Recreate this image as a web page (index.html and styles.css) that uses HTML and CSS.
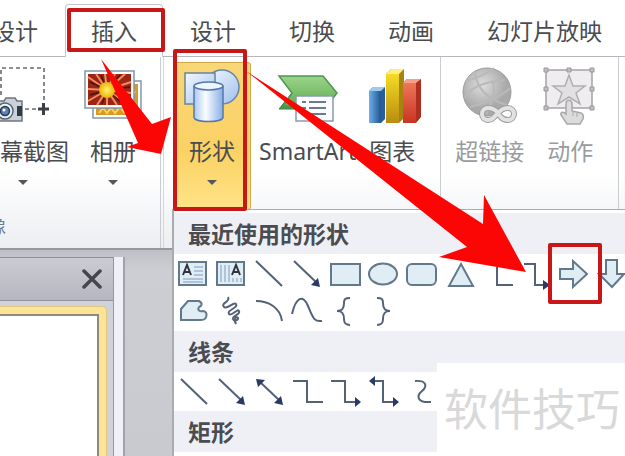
FILE: index.html
```html
<!DOCTYPE html>
<html lang="zh-CN">
<head>
  <meta charset="UTF-8" />
  <meta name="viewport" content="width=device-width, initial-scale=1.0"/>
  <title>插入 - 形状</title>
  <link rel="stylesheet" href="styles.css">
</head>
<body>

  <nav class="tabs">
    <button class="tab">设计</button>
    <button class="tab active">插入</button>
    <button class="tab">设计</button>
    <button class="tab">切换</button>
    <button class="tab">动画</button>
    <button class="tab">幻灯片放映</button>
  </nav>

  <!-- RIBBON -->
  <div class="ribbon">
    <div class="group images">
      <div class="tools">
        <button class="tool">
          <svg class="icon" viewBox="0 0 56 58">
            <path d="M6 29V2h43v41H29" fill="none" stroke="#666b72" stroke-width="1.6" stroke-dasharray="4 3"/>
            <path d="M43 43h11M48.500 37v12" stroke="#3c4046" stroke-width="3"/>
            <path d="M1 35h8l2-3h9l2 3h5v20H1z" fill="#c9d1da" stroke="#6d7580" stroke-width="1.500"/>
            <path d="M22 40h5v10h-5z" fill="#333a44"/>
            <circle cx="10" cy="45" r="8" fill="#eef2f6" stroke="#59636f" stroke-width="1.500"/>
            <circle cx="10" cy="45" r="4.500" fill="#5b82b0" stroke="#26384e" stroke-width="1.500"/>
            <circle cx="9" cy="44" r="1.500" fill="#fff"/>
          </svg>
          <span class="label">屏幕截图</span>
          <span class="caret"></span>
        </button>
        <button class="tool">
          <svg class="icon" viewBox="0 0 56 58">
            <defs>
              <radialGradient id="sun"><stop offset="0" stop-color="#fff36a"/><stop offset="1" stop-color="#e9b40b"/></radialGradient>
            </defs>
            <path d="M8 15h48v37H8z" fill="#fff" stroke="#8296a8" stroke-width="1.500"/>
            <path d="M11 18h42v31H11z" fill="#d99a24"/>
            <path d="M14 47l4-5 4 5 4-5 4 5 5-6 4 5 6-10 5-11" stroke="#f8d36a" stroke-width="2" fill="none"/>
            <path d="M0 5h49v37H0z" fill="#fff" stroke="#8296a8" stroke-width="1.500"/>
            <path d="M3 8h43v31H3z" fill="#9e2414"/>
            <path d="M22 24L3 11M22 24L11 8M22 24L20 8M22 24L30 8M22 24L40 8M22 24L46 16M22 24L46 27M22 24L44 39M22 24L32 39M22 24L22 39M22 24L12 39M22 24L3 35M22 24L3 23" stroke="#ee8e62" stroke-width="2"/>
            <path d="M22 24L5 16M22 24L16 9M22 24L35 9M22 24L45 21M22 24L38 38M22 24L17 38M22 24L5 29" stroke="#4b160e" stroke-width="1.500"/>
            <circle cx="22" cy="24" r="8" fill="url(#sun)"/>
          </svg>
          <span class="label">相册</span>
          <span class="caret"></span>
        </button>
      </div>
      <div class="caption">图像</div>
    </div>

    <div class="group illustrations">
      <div class="tools">
        <button class="tool selected">
          <svg class="icon" viewBox="0 0 56 58">
            <defs>
              <linearGradient id="glass" x2="1" y2="1"><stop offset="0" stop-color="#f3f9ff"/><stop offset="1" stop-color="#9fc0ec"/></linearGradient>
              <linearGradient id="can"><stop offset="0" stop-color="#a9c8f2"/><stop offset=".4" stop-color="#fafdff"/><stop offset="1" stop-color="#86aee6"/></linearGradient>
            </defs>
            <circle cx="38" cy="21" r="17" fill="url(#glass)" stroke="#6686ad" stroke-width="1.500"/>
            <path d="M1 7h30v31H1z" fill="url(#glass)" stroke="#6b8494" stroke-width="1.500"/>
            <path d="M10 20v31c0 6 29 6 29 0V20" fill="url(#can)" stroke="#5578a8" stroke-width="1.500"/>
            <ellipse cx="24.500" cy="20" rx="14.500" ry="4" fill="#edf5ff" stroke="#5578a8" stroke-width="1.500"/>
          </svg>
          <span class="label">形状</span>
          <span class="caret"></span>
        </button>
        <button class="tool">
          <svg class="icon" viewBox="0 0 56 58">
            <defs>
              <linearGradient id="leaf" x2="0" y2="1"><stop offset="0" stop-color="#9bd48a"/><stop offset="1" stop-color="#62ae56"/></linearGradient>
            </defs>
            <path d="M12 27L-1 43h17z" fill="#459a44" stroke="#3d8240"/>
            <path d="M-1 10h44l14 17-10 13H3l9-13z" fill="url(#leaf)" stroke="#4e9650" stroke-width="1.500"/>
            <path d="M16 30h37v25H16z" fill="#fbfcff" stroke="#8a9ab0" stroke-width="1.500"/>
            <path d="M22 36h4M22 42h4M22 48h4M29 36h17M29 42h17M29 48h17" stroke="#6b7a90" stroke-width="2"/>
          </svg>
          <span class="label">SmartArt</span>
        </button>
        <button class="tool">
          <svg class="icon" viewBox="0 0 56 58">
            <defs>
              <linearGradient id="blue"><stop offset="0" stop-color="#6db0ea"/><stop offset="1" stop-color="#20568f"/></linearGradient>
              <linearGradient id="gold" x2="0" y2="1"><stop offset="0" stop-color="#f5dc25"/><stop offset="1" stop-color="#b88c10"/></linearGradient>
              <linearGradient id="red" x2="0" y2="1"><stop offset="0" stop-color="#ee7658"/><stop offset="1" stop-color="#c93424"/></linearGradient>
            </defs>
            <path d="M5 25l4-4h12v32l-4 4H5z" fill="#265f99"/>
            <path d="M5 25h12v32H5z" fill="url(#blue)"/>
            <path d="M5 25l4-4h12l-4 4z" fill="#9bcbf0"/>
            <path d="M22 8l5-5h13v49l-5 5H22z" fill="#a58411"/>
            <path d="M22 8h13v49H22z" fill="url(#gold)"/>
            <path d="M22 8l5-5h13l-5 5z" fill="#fff07c"/>
            <path d="M39 17l4-4h14v38l-5 6H39z" fill="#ac2f20"/>
            <path d="M39 17h13v40H39z" fill="url(#red)"/>
            <path d="M39 17l4-4h14l-5 4z" fill="#f6a08a"/>
          </svg>
          <span class="label">图表</span>
        </button>
      </div>
    </div>

    <div class="group links">
      <div class="tools">
        <button class="tool" disabled>
          <svg class="icon" viewBox="0 0 56 58">
            <defs>
              <radialGradient id="globe" cx=".4" cy=".35"><stop offset="0" stop-color="#dedede"/><stop offset="1" stop-color="#a9a9a9"/></radialGradient>
            </defs>
            <circle cx="25" cy="26" r="24" fill="url(#globe)" stroke="#9c9c9c"/>
            <path d="M4 15c8-2 18-5 28-13M3 32c6-12 20-16 40-18M13 7c2 14 10 26 32 32M30 14c4 10 2 20-6 34M48 22c-8 8-20 14-40 19" fill="none" stroke="#b9b9b9" stroke-width="2"/>
            <path d="M36 47c-3-4-6-5-10-5a6 6 0 0 0 0 12c5 0 7-4 10-7s5-5 10-5a6 6 0 0 1 0 12c-4 0-6-1-8-4" fill="none" stroke="#9e9e9e" stroke-width="6" stroke-linecap="round"/>
            <path d="M36 47c-3-4-6-5-10-5a6 6 0 0 0 0 12c5 0 7-4 10-7s5-5 10-5a6 6 0 0 1 0 12c-4 0-6-1-8-4" fill="none" stroke="#e2e2e2" stroke-width="4" stroke-linecap="round"/>
          </svg>
          <span class="label">超链接</span>
        </button>
        <button class="tool" disabled>
          <svg class="icon" viewBox="0 0 56 58">
            <path d="M4 4h46v38H4z" fill="#efedf0" stroke="#a5a3a6" stroke-width="1.500"/>
            <path d="M27 9l4 11h12l-9 7 4 11-11-7-11 7 4-11-9-7h12z" fill="#e3e0e3" stroke="#b1aeb1" stroke-width="1.500"/>
            <path d="M2 2h4v4H2zM25 2h4v4h-4zM48 2h4v4h-4zM2 21h4v4H2zM48 21h4v4h-4zM2 40h4v4H2zM48 40h4v4h-4z" fill="#c2c0c2" stroke="#999"/>
            <path d="M24 38c0-5 6-5 6 0v7l9 2c2 1 3 3 2 6l-3 5H25l-6-9c-1-3 2-4 5-1z" fill="#dcdcdc" stroke="#a8a8a8" stroke-width="1.500"/>
            <path d="M31 46v4M35 47v4" stroke="#a8a8a8"/>
          </svg>
          <span class="label">动作</span>
        </button>
      </div>
    </div>
  </div>

  <!-- SLIDE PANE -->
  <div class="workspace">
    <div class="pane">
      <div class="pane-head">
        <button class="close-btn" aria-label="关闭">
          <svg viewBox="0 0 20 20"><path d="M2 2l16 16M18 2L2 18" stroke="#45474c" stroke-width="3.500" stroke-linecap="round"/></svg>
        </button>
      </div>
      <div class="slide-frame"><div class="slide"></div></div>
    </div>
    <div class="splitter"></div>
  </div>

  <!-- SHAPES MENU -->
  <div class="menu">
    <h2>最近使用的形状</h2>
    <div class="shapes">
      <button aria-label="文本框"><svg viewBox="0 0 38 38"><path class="fill" d="M5 8h27v23H5z"/><path class="thin" d="M20 13h9M20 17h9M20 21h9M9 25h20M9 28h20"/><path class="bold" d="M9 21l4-10 4 10M10 18h6"/></svg></button>
      <button aria-label="竖排文本框"><svg viewBox="0 0 38 38"><path class="fill" d="M5 8h27v23H5z"/><path class="thin" d="M9 11v17M13 11v17M17 11v17M21 24v4M25 24v4M29 24v4"/><path class="bold" d="M20 21l4-10 4 10M21 18h6"/></svg></button>
      <button aria-label="直线"><svg viewBox="0 0 38 38"><path d="M6 7l26 25"/></svg></button>
      <button aria-label="箭头"><svg viewBox="0 0 38 38"><path d="M6 7l23 22"/><path class="head" d="M32 33l-9-2 7-7z"/></svg></button>
      <button aria-label="矩形"><svg viewBox="0 0 38 38"><path class="fill" d="M5 10h29v21H5z"/></svg></button>
      <button aria-label="椭圆"><svg viewBox="0 0 38 38"><ellipse class="fill" cx="19" cy="20" rx="14" ry="10.500"/></svg></button>
      <button aria-label="圆角矩形"><svg viewBox="0 0 38 38"><rect class="fill" x="5" y="10" width="29" height="21" rx="5"/></svg></button>
      <button aria-label="三角形"><svg viewBox="0 0 38 38"><path class="fill" d="M21 10l12 22H9z"/></svg></button>
      <button aria-label="肘形连接符"><svg viewBox="0 0 38 38"><path d="M10 10h9v21h16"/></svg></button>
      <button aria-label="肘形箭头连接符"><svg viewBox="0 0 38 38"><path d="M8 10h11v21h9"/><path class="head" d="M34 31l-7-5v10z"/></svg></button>
      <button aria-label="右箭头"><svg viewBox="0 0 38 38"><path class="fill" d="M6 15h13V7l14 13-14 13v-8H6z"/></svg></button>
      <button aria-label="下箭头"><svg viewBox="0 0 38 38"><path class="fill" d="M14 6h11v14h7L20 33 7 20h7z"/></svg></button>
      <button aria-label="任意多边形"><svg viewBox="0 0 38 38"><path class="fill" d="M14 9h11c4 2 3 5 0 6-2 3 1 5 4 4 5 0 5 9-2 9H7V17z"/></svg></button>
      <button aria-label="自由曲线"><svg viewBox="0 0 38 38"><path d="M16 5c3 5-8 6-4 10 3 3 10-6 12-3 3 4-10 6-7 10 3 3 8-6 10-3 2 4-7 4-6 8 1 3 6 1 5-1s-5 0-2 6"/></svg></button>
      <button aria-label="弧形"><svg viewBox="0 0 38 38"><path d="M6 9c12 0 24 6 26 20"/></svg></button>
      <button aria-label="曲线"><svg viewBox="0 0 38 38"><path d="M4 22C8 5 15 2 20 14s6 16 14 15"/></svg></button>
      <button aria-label="左大括号"><svg viewBox="0 0 38 38"><path d="M24 6c-5 0-6 1-6 5 0 6-2 8-7 8 5 0 7 2 7 8 0 4 1 6 6 6"/></svg></button>
      <button aria-label="右大括号"><svg viewBox="0 0 38 38"><path d="M13 6c5 0 6 1 6 5 0 6 2 8 7 8-5 0-7 2-7 8 0 4-1 6-6 6"/></svg></button>
    </div>

    <h2>线条</h2>
    <div class="shapes">
      <button aria-label="直线"><svg viewBox="0 0 38 38"><path d="M7 7l26 25"/></svg></button>
      <button aria-label="箭头"><svg viewBox="0 0 38 38"><path d="M7 7l22 21"/><path class="head" d="M33 33l-9-2 7-7z"/></svg></button>
      <button aria-label="双箭头"><svg viewBox="0 0 38 38"><path d="M10 10l19 18"/><path class="head" d="M33 33l-9-2 7-7zM6 7l9 1-7 7z"/></svg></button>
      <button aria-label="肘形连接符"><svg viewBox="0 0 38 38"><path d="M5 9h14v21h16"/></svg></button>
      <button aria-label="肘形箭头连接符"><svg viewBox="0 0 38 38"><path d="M5 9h14v21h10"/><path class="head" d="M35 30l-6-5v10z"/></svg></button>
      <button aria-label="肘形双箭头连接符"><svg viewBox="0 0 38 38"><path d="M10 9h9v21h10"/><path class="head" d="M35 30l-6-5v10zM5 9l6-5v10z"/></svg></button>
      <button aria-label="曲线连接符"><svg viewBox="0 0 38 38"><path d="M13 9c11-1 13 5 7 10s-5 12 9 11"/></svg></button>
    </div>

    <h2>矩形</h2>
  </div>

  <div class="watermark">软件技巧</div>

  <!-- MARKS -->
  <svg class="marks" width="625" height="456">
    <g fill="#fc0605">
      <path d="M101 59L152 124 171 117 161 154 127 147 138 143z"/>
      <path d="M246 71L483 224 484 195 526 272 439 257 467 247z"/>
    </g>
    <g fill="none" stroke="#c91718" stroke-width="4" stroke-linejoin="round">
      <rect x="69" y="10" width="94" height="40"/>
      <rect x="175" y="51" width="70" height="158"/>
      <rect x="550" y="245" width="50" height="57"/>
    </g>
  </svg>

</body>
</html>
```
FILE: styles.css
```css
* {
  margin: 0;
  padding: 0;
  box-sizing: border-box;
  font-family: 'Noto Sans', 'Noto Sans CJK SC', sans-serif;
}

html, body {
  height: 100%;
  overflow: hidden;
}

body {
  position: relative;
  display: flex;
  flex-direction: column;
  background: #fff;
  color: #4a4c50;
}

button {
  border: none;
  background: none;
  color: inherit;
}

/* Tabs */
.tabs {
  display: flex;
  flex-shrink: 0;
  gap: 1px;
  height: 57px;
  padding-top: 4px;
  margin-left: -34px;
  border-bottom: 1px solid #b4b7bc;
}

.tab {
  flex-shrink: 0;
  height: 53px;
  padding: 0 26px;
  font-size: 23px;
  line-height: 32px;
}

.tab.active {
  background: #fff;
  border: 1px solid #c3c6cc;
  border-bottom: none;
  border-radius: 4px 4px 0 0;
  padding: 0 25px;
}

/* Ribbon */
.ribbon {
  display: flex;
  flex-shrink: 0;
  height: 193px;
  background: linear-gradient(#fff 60%, #eceef1);
  border-bottom: 2px solid #96989d;
}

.group {
  flex-shrink: 0;
  padding-top: 5px;
  border-right: 1px solid #c9ccd1;
}

.tools {
  display: flex;
}

.images {
  margin-left: -34px;
  padding-left: 11px;
  padding-right: 19px;
}

.images .tools {
  gap: 16px;
}

.illustrations {
  margin-left: 2px;
  padding-left: 9px;
  padding-right: 20px;
  border-left: 1px solid #d5d7db;
}

.illustrations .tools {
  gap: 8px;
}

.links {
  padding-left: 14px;
  padding-right: 20px;
}

.links .tools {
  gap: 18px;
}

.tool {
  display: flex;
  flex-direction: column;
  align-items: center;
  height: 148px;
  padding-top: 4px;
}

.tool.selected {
  padding: 3px 10px 0;
  border: 1px solid #d3a648;
  border-radius: 3px;
  background: linear-gradient(#f8d778, #fbd163 60%, #ffe487);
}

.tool:disabled {
  color: #999b9f;
}

.icon {
  width: 56px;
  height: 58px;
  overflow: visible;
}

.label {
  margin-top: 11px;
  font-size: 23px;
  line-height: 32px;
  white-space: nowrap;
}

.caret {
  margin-top: 13px;
  border: 5px solid transparent;
  border-top-color: #55575b;
  border-bottom: none;
}

.caption {
  margin-top: 2px;
  margin-left: -7px;
  font-size: 18px;
  line-height: 28px;
  color: #6b7a92;
}

/* Slide pane */
.workspace {
  display: flex;
  flex: 1;
  padding-top: 7px;
  background: linear-gradient(#bfc0c5, #cdced3 20px, #c9cacf);
}

.pane {
  display: flex;
  flex-direction: column;
  width: 114px;
  border-top: 1px solid #8e9097;
  border-right: 1px solid #9496a0;
  background: #d0d2da;
}

.pane-head {
  display: flex;
  align-items: center;
  justify-content: flex-end;
  height: 43px;
  padding-right: 11px;
  border-bottom: 1px solid #9193a0;
  background: linear-gradient(#cbccd3, #b5b6c0);
}

.close-btn {
  width: 20px;
  height: 20px;
}

.close-btn svg {
  display: block;
}

.slide-frame {
  flex: 1;
  margin: 5px 6px 0 0;
  padding: 7px 7px 0 0;
  border: 1px solid #e2c878;
  border-width: 1px 1px 0 0;
  border-radius: 0 5px 0 0;
  background: #fbe39a;
}

.slide {
  height: 100%;
  border: 2px solid #8f8a78;
  border-width: 2px 2px 0 0;
  background: #fff;
}

.splitter {
  width: 11px;
  border-right: 2px solid #a2a3a9;
  background: #f0f1f6;
}

/* Shapes menu */
.menu {
  position: absolute;
  top: 209px;
  right: 0;
  bottom: 0;
  left: 172px;
  padding-top: 3px;
  overflow: hidden;
  border-top: 1px solid #a9abb0;
  border-left: 2px solid #a9abb0;
  background: #fff;
}

.menu h2 {
  height: 41px;
  padding-left: 14px;
  font-size: 23px;
  font-weight: 700;
  line-height: 42px;
  background: #eff0f6;
}

.shapes {
  display: grid;
  grid-template-columns: repeat(12, 38px);
  grid-auto-rows: 38px;
  padding-bottom: 1px;
}

.shapes svg {
  display: block;
  width: 38px;
  height: 38px;
  fill: none;
  stroke: #536179;
  stroke-width: 2;
}

.shapes .fill {
  fill: #e1edf5;
  stroke: #61798b;
}

.shapes .thin {
  stroke: #7f9cc0;
  stroke-width: 1;
}

.shapes .bold {
  stroke: #30353d;
  stroke-width: 2;
}

.shapes .head {
  fill: #293b64;
  stroke: none;
}

.watermark {
  position: absolute;
  right: 0;
  bottom: 0;
  padding: 0 5px 0 7px;
  font-size: 44px;
  font-weight: 400;
  line-height: 93px;
  color: #d9d9d9;
  background: #fff;
}

.marks {
  position: absolute;
  top: 0;
  left: 0;
  pointer-events: none;
}
```
